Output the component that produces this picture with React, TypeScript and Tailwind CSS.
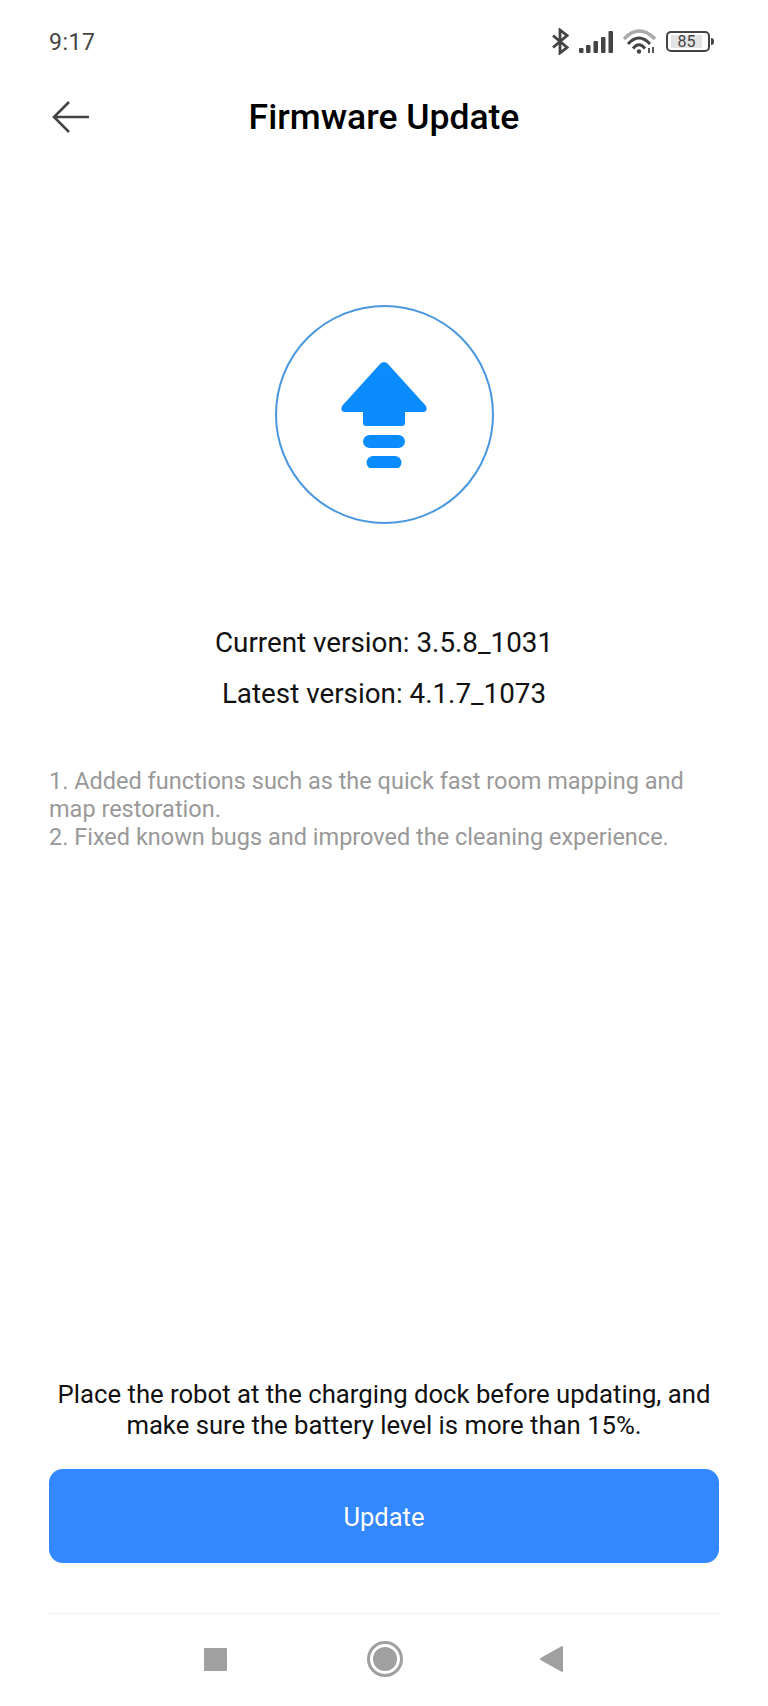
const UpdateIcon = () => (
  <svg width="86" height="106" viewBox="0 0 86 106" fill="#0a8cff">
    <path d="M43 0 Q45 0 46.500 1.500 L85 44 Q87 50 82 50 L64 50 L64 61 Q64 64 61 64 L25 64 Q22 64 22 61 L22 50 L4 50 Q-1 50 1 44 L39.500 1.500 Q41 0 43 0 Z" />
    <rect x="22" y="73" width="42" height="13" rx="6.500" />
    <rect x="25.500" y="94" width="35" height="13" rx="6.500" />
  </svg>
)

const StatusIcons = () => (
  <div className="flex items-center mt-[1px]">
    <svg width="17" height="27" viewBox="0 0 17 27" fill="none" stroke="#444" strokeWidth="2.800">
      <path d="M1 7.500 L15 19.500 L8 25 L8 2 L15 7.500 L1 19.500" />
    </svg>
    <svg width="34" height="22" viewBox="0 0 34 22" fill="#444" className="ml-[10px]">
      <rect x="0" y="17" width="4.500" height="5" rx="1" />
      <rect x="7" y="14" width="4.500" height="8" rx="1" />
      <rect x="14.500" y="10" width="4.500" height="12" rx="1" />
      <rect x="22" y="6" width="4.500" height="16" rx="1" />
      <rect x="29.500" y="0" width="4.500" height="22" rx="1" />
    </svg>
    <svg width="33" height="25" viewBox="0 0 33 25" fill="none" className="ml-[10px]">
      <path d="M1 10 Q16 -6 32 10" stroke="#aaa" strokeWidth="3.500" />
      <path d="M5 15 Q16 3 27 15" stroke="#444" strokeWidth="3" />
      <path d="M10 19.500 Q16 12 22 19.500" stroke="#444" strokeWidth="3" />
      <circle cx="16" cy="22.500" r="2.200" fill="#444" />
      <path d="M26 19 V24 M30 18 V24" stroke="#444" strokeWidth="1.800" />
    </svg>
    <div className="ml-[10px] flex items-center">
      <div className="w-[44px] h-[21px] rounded-[5px] border-2 border-[#444] flex items-center pl-[3px]">
        <div className="w-[31px] h-[13px] bg-[#e4e4e4] flex items-center justify-center text-[16px] leading-none text-[#444]">
          85
        </div>
      </div>
      <div className="w-[3px] h-[7px] ml-[1px] rounded-r-sm bg-[#444]" />
    </div>
  </div>
)

const NavBar = () => (
  <div className="mx-[46px] border-t border-[#f2f2f2] h-[93px]">
    <div className="flex items-center justify-center h-[90px] ml-[-2px]">
      <div className="w-[23px] h-[23px] bg-[#a0a0a0] rounded-[1px] mr-[140px]" />
      <div className="w-[36px] h-[36px] rounded-full border-[3px] border-[#a0a0a0] flex items-center justify-center">
        <div className="w-[24px] h-[24px] rounded-full bg-[#a0a0a0]" />
      </div>
      <svg width="23" height="26" viewBox="0 0 23 26" fill="#a0a0a0" className="ml-[137px]">
        <path d="M22 0 Q23 0 23 1 L23 25 Q23 26 22 26 L0.500 14 Q-0.500 13 0.500 12 Z" />
      </svg>
    </div>
  </div>
)

export default function App() {
  return (
    <div className="w-[768px] h-[1706px] bg-white flex flex-col font-['Roboto',sans-serif]">
      <div className="h-[84px] pl-[49px] pr-[54px] pt-[27px] flex justify-between items-start">
        <span className="mt-[2px] text-[23px] leading-[28px] text-[#444] tracking-[0.5px]">9:17</span>
        <StatusIcons />
      </div>

      <div className="relative h-[66px] flex items-center justify-center">
        <svg width="38" height="32" viewBox="0 0 38 32" fill="none" stroke="#444" strokeWidth="2.600" className="absolute left-[52px] top-[17px]">
          <path d="M37 16 H2 M17 1 L2 16 L17 31" />
        </svg>
        <h1 className="mt-[2px] text-[35.500px] font-medium text-black">Firmware Update</h1>
      </div>

      <div className="flex justify-center mt-[155px]">
        <div className="w-[219px] h-[219px] rounded-full border-2 border-[#4a97e0] flex items-center justify-center">
          <UpdateIcon />
        </div>
      </div>

      <div className="mt-[93px] flex flex-col items-center text-[27.800px] leading-[51px] text-[#111]">
        <p>Current version: 3.5.8_1031</p>
        <p>Latest version: 4.1.7_1073</p>
      </div>

      <div className="mt-[48px] px-[49px] text-[23.500px] leading-[28px] text-[#999]">
        <p>1. Added functions such as the quick fast room mapping and map restoration.</p>
        <p>2. Fixed known bugs and improved the cleaning experience.</p>
      </div>

      <div className="mt-auto px-[49px] text-center text-[25.700px] leading-[31px] text-[#111]">
        <p>Place the robot at the charging dock before updating, and</p>
        <p>make sure the battery level is more than 15%.</p>
      </div>

      <div className="mx-[49px] mt-[28px] mb-[50px] h-[94px] pt-[3px] rounded-[14px] bg-[#3388ff] flex items-center justify-center text-[25.500px] text-white">
        Update
      </div>

      <NavBar />
    </div>
  )
}
